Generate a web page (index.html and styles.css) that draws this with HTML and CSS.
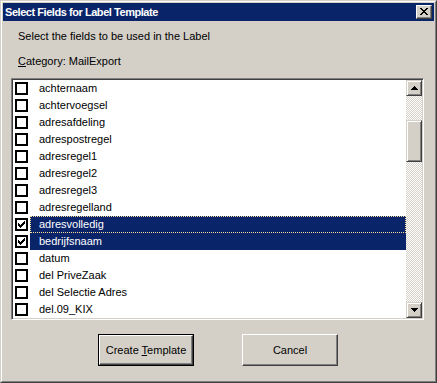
FILE: index.html
```html
<!DOCTYPE html>
<html>
<head>
<meta charset="utf-8">
<link rel="stylesheet" href="styles.css">
</head>
<body>
<div class="win">
  <div class="frame">
    <div class="titlebar">
      <span class="title">Select Fields for Label Template</span>
      <span class="close">
        <svg width="8" height="7" viewBox="0 0 8 7"><path d="M0 0h2v1h1v1h2V1h1V0h2v1H7v1H6v1H5v1h1v1h1v1h1v1H6V6H5V5H3v1H2v1H0V6h1V5h1V4h1V3H2V2H1V1H0z" fill="#000"/></svg>
      </span>
    </div>
    <div class="body">
      <div class="intro">Select the fields to be used in the Label</div>
      <div class="category"><u>C</u>ategory: MailExport</div>
      <div class="listbox">
        <div class="items">
          <div class="row"><span class="cb"></span><span class="lbl">achternaam</span></div>
          <div class="row"><span class="cb"></span><span class="lbl">achtervoegsel</span></div>
          <div class="row"><span class="cb"></span><span class="lbl">adresafdeling</span></div>
          <div class="row"><span class="cb"></span><span class="lbl">adrespostregel</span></div>
          <div class="row"><span class="cb"></span><span class="lbl">adresregel1</span></div>
          <div class="row"><span class="cb"></span><span class="lbl">adresregel2</span></div>
          <div class="row"><span class="cb"></span><span class="lbl">adresregel3</span></div>
          <div class="row"><span class="cb"></span><span class="lbl">adresregelland</span></div>
          <div class="row sel focus"><span class="cb"><svg width="7" height="7" viewBox="0 0 7 7"><path d="M6 0h1v3H6v1H5v1H4v1H3v1H2V6H1V5H0V2h1v1h1v1h1V3h1V2h1V1h1z" fill="#000"/></svg></span><span class="lbl">adresvolledig</span></div>
          <div class="row sel"><span class="cb"><svg width="7" height="7" viewBox="0 0 7 7"><path d="M6 0h1v3H6v1H5v1H4v1H3v1H2V6H1V5H0V2h1v1h1v1h1V3h1V2h1V1h1z" fill="#000"/></svg></span><span class="lbl">bedrijfsnaam</span></div>
          <div class="row"><span class="cb"></span><span class="lbl">datum</span></div>
          <div class="row"><span class="cb"></span><span class="lbl">del PriveZaak</span></div>
          <div class="row"><span class="cb"></span><span class="lbl">del Selectie Adres</span></div>
          <div class="row"><span class="cb"></span><span class="lbl">del.09_KIX</span></div>
        </div>
        <div class="vscroll">
          <div class="sbtn"><svg width="7" height="4" viewBox="0 0 7 4"><path d="M3 0h1v1h1v1h1v1h1v1H0V3h1V2h1V1h1z" fill="#000"/></svg></div>
          <div class="track">
            <div class="gap1"></div>
            <div class="thumb"></div>
            <div class="gap2"></div>
          </div>
          <div class="sbtn"><svg width="7" height="4" viewBox="0 0 7 4"><path d="M0 0h7v1H6v1H5v1H4v1H3V3H2V2H1V1H0z" fill="#000"/></svg></div>
        </div>
      </div>
      <div class="buttons">
        <div class="btn default"><div class="btn-in"><span>Create <u>T</u>emplate</span></div></div>
        <div class="btn"><div class="btn-in"><span>Cancel</span></div></div>
      </div>
    </div>
  </div>
</div>
</body>
</html>
```
FILE: styles.css
```css
html, body {
  margin: 0;
  padding: 0;
  background: #d4d0c8;
}
.win {
  width: 437px;
  height: 383px;
  box-sizing: border-box;
  border: 1px solid;
  border-color: #d4d0c8 #404040 #404040 #d4d0c8;
  font-family: "Liberation Sans", Arial, sans-serif;
  font-size: 11px;
  color: #000;
}
.frame {
  height: 100%;
  box-sizing: border-box;
  border: 1px solid;
  border-color: #ffffff #808080 #808080 #ffffff;
  padding: 1px;
  background: #d4d0c8;
  display: flex;
  flex-direction: column;
}
.titlebar {
  height: 18px;
  background: #0a246a;
  display: flex;
  align-items: center;
  justify-content: space-between;
  padding: 0 2px 0 2px;
}
.title {
  color: #fff;
  font-weight: bold;
  font-size: 11px;
  letter-spacing: -0.45px;
  line-height: 18px;
}
.close {
  width: 16px;
  height: 14px;
  box-sizing: border-box;
  background: #d4d0c8;
  border: 1px solid;
  border-color: #ffffff #404040 #404040 #ffffff;
  box-shadow: inset -1px -1px 0 #808080;
  display: flex;
  align-items: center;
  justify-content: center;
  padding: 0 1px 1px 0;
}
.close svg { display: block; }
.body {
  display: flex;
  flex-direction: column;
  flex: 1;
}
.intro {
  margin-top: 9px;
  padding-left: 15px;
  line-height: 13px;
}
.category {
  margin-top: 12px;
  padding-left: 15px;
  line-height: 13px;
}
.listbox {
  margin: 10px 0 0 8px;
  width: 413px;
  height: 242px;
  box-sizing: border-box;
  border: 1px solid;
  border-color: #808080 #ffffff #ffffff #808080;
  box-shadow: inset 1px 1px 0 #404040, inset -1px -1px 0 #d4d0c8;
  padding: 1px;
  display: flex;
  background: #fff;
}
.items {
  flex: 1;
  display: flex;
  flex-direction: column;
}
.row {
  height: 17px;
  display: flex;
  align-items: flex-start;
}
.cb {
  width: 13px;
  height: 13px;
  box-sizing: border-box;
  border: 2px solid #000;
  background: #fff;
  margin: 2px 0 0 2px;
  display: flex;
  align-items: center;
  justify-content: center;
}
.cb svg { display: block; }
.lbl {
  flex: 1;
  height: 17px;
  line-height: 17px;
  margin-left: 2px;
  padding-left: 9px;
  box-sizing: border-box;
}
.sel .lbl {
  background: #0a246a;
  color: #fff;
}
.focus .lbl {
  outline: 1px dotted #f5db95;
  outline-offset: -1px;
}
.vscroll {
  width: 16px;
  display: flex;
  flex-direction: column;
}
.sbtn {
  width: 16px;
  height: 16px;
  box-sizing: border-box;
  background: #d4d0c8;
  border: 1px solid;
  border-color: #d4d0c8 #404040 #404040 #d4d0c8;
  box-shadow: inset 1px 1px 0 #fff, inset -1px -1px 0 #808080;
  display: flex;
  align-items: center;
  justify-content: center;
}
.sbtn svg { display: block; }
.track {
  flex: 1;
  display: flex;
  flex-direction: column;
  background-color: #fff;
  background-image: conic-gradient(#d4d0c8 25%, #fff 0 50%, #d4d0c8 0 75%, #fff 0);
  background-size: 2px 2px;
}
.gap1 { height: 24px; }
.thumb {
  height: 42px;
  box-sizing: border-box;
  background: #d4d0c8;
  border: 1px solid;
  border-color: #d4d0c8 #404040 #404040 #d4d0c8;
  box-shadow: inset 1px 1px 0 #fff, inset -1px -1px 0 #808080;
}
.gap2 { flex: 1; }
.buttons {
  margin-top: 14px;
  display: flex;
  justify-content: center;
  gap: 48px;
  padding-right: 1px;
}
.btn {
  width: 96px;
  height: 32px;
  box-sizing: border-box;
  border: 1px solid;
  border-color: #ffffff #404040 #404040 #ffffff;
  box-shadow: inset -1px -1px 0 #808080;
  display: flex;
}
.btn.default {
  border: 1px solid #000;
  box-shadow: none;
}
.btn.default .btn-in {
  border: 1px solid;
  border-color: #ffffff #404040 #404040 #ffffff;
  box-shadow: inset -1px -1px 0 #808080;
}
.btn-in {
  flex: 1;
  display: flex;
  align-items: center;
  justify-content: center;
  box-sizing: border-box;
}
```
